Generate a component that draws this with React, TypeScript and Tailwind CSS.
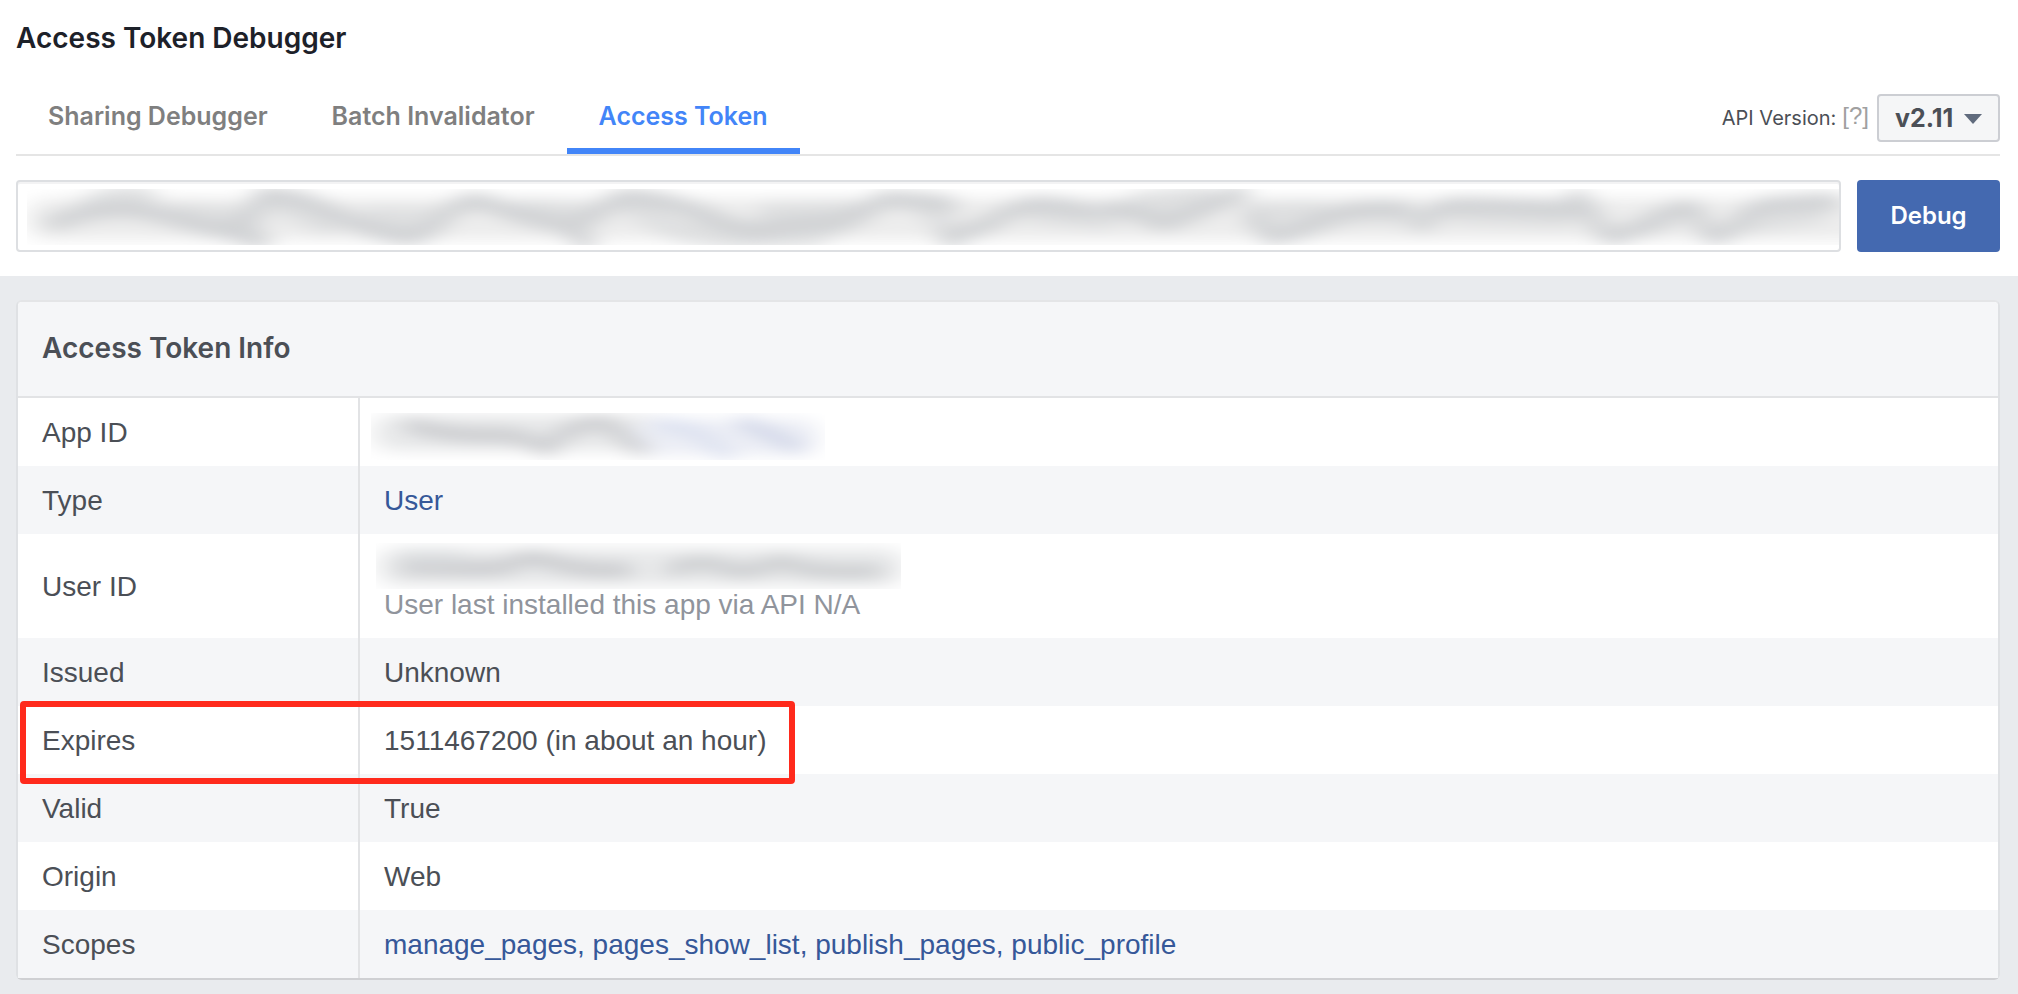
import React, { useState } from 'react';

const tabs = ['Sharing Debugger', 'Batch Invalidator', 'Access Token'];
const versions = ['v2.11', 'v2.10', 'v2.9', 'v2.8'];
const scopes = ['manage_pages', 'pages_show_list', 'publish_pages', 'public_profile'];

type SmudgeProps = {
    id: string;
    width: number;
    height: number;
    className: string;
    children: React.ReactNode;
};

// Soft grey smear that covers a private value
const Smudge: React.FC<SmudgeProps> = ({ id, width, height, className, children }) => (
    <svg
        className={`absolute pointer-events-none overflow-hidden ${className}`}
        viewBox={`0 0 ${width} ${height}`}
        preserveAspectRatio="none"
        aria-hidden="true"
    >
        <defs>
            <filter id={id} filterUnits="userSpaceOnUse" x={-60} y={-60} width={width + 120} height={height + 120}>
                <feGaussianBlur stdDeviation="12 7" />
            </filter>
        </defs>
        <g filter={`url(#${id})`} fill="none" strokeLinecap="round" strokeLinejoin="round">
            {children}
        </g>
    </svg>
);

const TokenSmudge: React.FC = () => (
    <Smudge id="blur-token" width={1812} height={56} className="left-[9px] right-0 top-[7px] h-14 w-[calc(100%-9px)]">
        <path d="M20 30H1840" stroke="#ededed" strokeWidth="42" />
        <g stroke="#dfe0e1" strokeWidth="22">
            <path d="M60 18C80 8 100 6 120 10" />
            <path d="M150 24L230 30M240 10L300 36M600 16L650 42L700 48L790 46" />
            <path d="M345 28L410 30M500 20L570 26M740 24L820 22" />
            <path d="M800 40L840 22M900 20C910 30 920 40 926 50" />
            <path d="M1110 14L1180 8M1010 24L1080 30M1230 24L1290 22" />
            <path d="M1270 42C1290 34 1310 24 1340 24C1365 22 1385 28 1397 34" />
            <path d="M1430 24L1540 28M1620 38L1650 26M1720 34L1790 24" />
        </g>
        <g stroke="#d0d2d4" strokeWidth="17">
            <path d="M26 33C40 32 48 25 60 24C90 18 110 20 129 25C155 30 175 38 200 42L235 52" />
            <path d="M200 40C225 34 225 14 238 6C260 8 275 10 290 17C310 26 325 34 345 40C365 46 380 50 392 46C412 40 420 14 448 12C468 14 480 24 500 28C520 32 530 34 540 38L560 54" />
            <path d="M540 38C568 30 575 14 598 8C630 10 650 14 673 24C690 32 710 40 730 42" />
            <path d="M730 42C760 36 780 34 807 34C825 30 838 18 860 10C885 12 910 12 923 16" />
            <path d="M920 48C955 40 965 32 981 24C990 18 1000 16 1010 15C1030 16 1045 18 1060 22" />
            <path d="M1080 20C1100 20 1120 26 1132 34C1150 32 1165 24 1180 18L1213 4" />
            <path d="M1225 28L1244 48C1260 46 1280 38 1300 28C1320 20 1350 18 1378 20" />
            <path d="M1397 34C1405 24 1410 18 1430 16C1460 16 1500 18 1550 20" />
            <path d="M1550 8C1568 20 1570 46 1586 48C1610 44 1630 24 1660 18C1680 24 1670 44 1690 48C1710 42 1715 22 1740 16L1806 12" />
        </g>
    </Smudge>
);

const AppIdSmudge: React.FC = () => (
    <Smudge id="blur-app" width={454} height={47} className="-left-[13px] -top-[2px] h-[47px] w-[454px]">
        <path d="M20 20H280" stroke="#e8e9ea" strokeWidth="36" />
        <path d="M280 24H430" stroke="#eceef5" strokeWidth="36" />
        <path d="M40 12C60 18 90 24 130 22C150 22 160 30 178 36C190 18 210 8 236 10C250 18 255 28 270 36" stroke="#cccdd0" strokeWidth="15" />
        <path d="M290 12C320 12 335 24 355 42" stroke="#dce1f0" strokeWidth="14" />
        <path d="M372 10C390 16 405 24 426 34" stroke="#d3d8e9" strokeWidth="14" />
    </Smudge>
);

const UserIdSmudge: React.FC = () => (
    <Smudge id="blur-user" width={525} height={46} className="-left-[8px] -top-[8px] h-[46px] w-[525px]">
        <path d="M20 24H510" stroke="#e9eaeb" strokeWidth="38" />
        <path d="M30 24C60 24 100 28 130 24C145 16 150 14 165 16C185 22 200 28 250 27" stroke="#cccdd0" strokeWidth="16" />
        <path d="M296 26C320 18 340 18 350 26C375 30 385 26 405 18C420 24 430 30 500 28" stroke="#cdcfd1" strokeWidth="15" />
        <path d="M30 14H80" stroke="#dcdee0" strokeWidth="14" />
    </Smudge>
);

type RowProps = {
    label: string;
    highlighted?: boolean;
    children: React.ReactNode;
};

const InfoRow: React.FC<RowProps> = ({ label, highlighted, children }) => (
    <tr className="even:bg-[#f5f6f8]">
        <th scope="row" className="relative w-[341px] border-r-2 border-[#e2e3e5] pt-[17px] pb-[15px] pl-6 text-left align-middle font-normal">
            {label}
            {highlighted && (
                <span className="absolute -top-[5px] left-[2px] z-10 h-[83px] w-[775px] rounded-[4px] border-6 border-[#ff2a1c] pointer-events-none"></span>
            )}
        </th>
        <td className="pt-[17px] pb-[15px] px-6">{children}</td>
    </tr>
);

const App: React.FC = () => {
    const [activeTab, setActiveTab] = useState('Access Token');

    return (
        <div className="min-h-screen bg-[#e9ebee] font-['Liberation_Sans',Arial,sans-serif] text-[28px] leading-9 text-[#4b4f56]">
            {/* Header */}
            <header className="bg-white pl-4 pr-[18px] pt-5 pb-6 font-['Inter',sans-serif]">
                <h1 className="text-[28px] leading-9 font-semibold text-[#1d2129]">Access Token Debugger</h1>

                <div className="mt-5 flex items-end justify-between border-b-2 border-[#e5e5e5]">
                    <nav className="flex">
                        {tabs.map((tab) => (
                            <button
                                key={tab}
                                type="button"
                                onClick={() => setActiveTab(tab)}
                                className={`h-[78px] px-8 pt-2 border-b-6 text-[25px] font-semibold ${
                                    tab === activeTab ? 'border-[#4285f8] text-[#4285f8]' : 'border-transparent text-[#7f7f7f]'
                                }`}
                            >
                                {tab}
                            </button>
                        ))}
                    </nav>

                    <div className="mb-3 flex items-center">
                        <label htmlFor="version" className="text-xl">API Version:</label>
                        <a href="#help" className="ml-1.5 mr-2 pb-1 font-['Liberation_Sans',Arial,sans-serif] text-2xl text-[#a0a0a0]">[?]</a>
                        <div className="relative">
                            <select
                                id="version"
                                defaultValue="v2.11"
                                className="block h-12 w-[123px] appearance-none rounded-[4px] border-2 border-[#ccced3] bg-[#f5f6f7] pl-4 text-[25px] font-bold"
                            >
                                {versions.map((version) => (
                                    <option key={version}>{version}</option>
                                ))}
                            </select>
                            <svg className="absolute right-[18px] top-5 h-2.5 w-[18px] pointer-events-none" viewBox="0 0 18 10" aria-hidden="true">
                                <path d="M0 0H18L9 10Z" fill="#606b7d" />
                            </svg>
                        </div>
                    </div>
                </div>

                <form className="mt-6 flex gap-4" onSubmit={(e) => e.preventDefault()}>
                    <div className="relative flex-1">
                        <input
                            type="text"
                            aria-label="Access token"
                            className="block h-[72px] w-full rounded-[4px] border-2 border-[#dddfe2] bg-white px-4 shadow-[inset_0_2px_0_#f3f3f4] outline-none"
                        />
                        <div className="absolute inset-0.5 pointer-events-none">
                            <TokenSmudge />
                        </div>
                    </div>
                    <button type="submit" className="h-[72px] w-[143px] rounded-[4px] bg-[#4469b0] text-2xl font-semibold text-white">
                        Debug
                    </button>
                </form>
            </header>

            {/* Token details */}
            <main className="pl-4 pr-[18px] pt-6">
                <section className="rounded-[6px] border-2 border-[#dfe1e4] border-t-[#e4e5e7] border-b-[#cfd0d3] bg-white">
                    <h2 className="rounded-t-[4px] border-b-2 border-[#e2e3e5] bg-[#f5f6f8] px-6 pt-7 pb-[30px] font-['Inter',sans-serif] font-semibold">
                        Access Token Info
                    </h2>
                    <table className="w-full table-fixed border-collapse">
                        <tbody>
                            <InfoRow label="App ID">
                                <div className="relative h-9">
                                    <AppIdSmudge />
                                </div>
                            </InfoRow>
                            <InfoRow label="Type">
                                <a href="#user" className="text-[#365899]">User</a>
                            </InfoRow>
                            <InfoRow label="User ID">
                                <div className="relative h-9">
                                    <UserIdSmudge />
                                </div>
                                <div className="text-[#90949c]">User last installed this app via API N/A</div>
                            </InfoRow>
                            <InfoRow label="Issued">Unknown</InfoRow>
                            <InfoRow label="Expires" highlighted>1511467200 (in about an hour)</InfoRow>
                            <InfoRow label="Valid">True</InfoRow>
                            <InfoRow label="Origin">Web</InfoRow>
                            <InfoRow label="Scopes">
                                <a href="#scopes" className="text-[#365899]">{scopes.join(', ')}</a>
                            </InfoRow>
                        </tbody>
                    </table>
                </section>
            </main>
        </div>
    );
};

export default App;
